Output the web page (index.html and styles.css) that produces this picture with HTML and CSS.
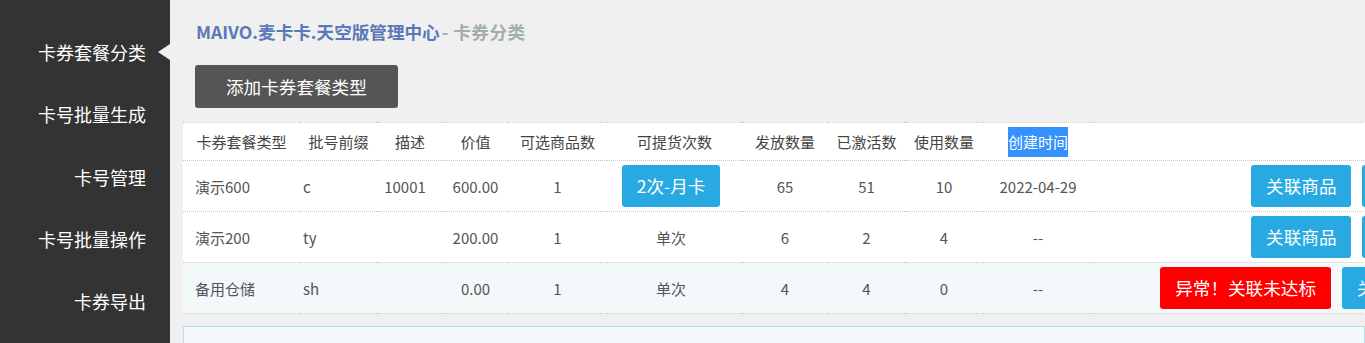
FILE: index.html
```html
<!DOCTYPE html>
<html lang="zh-CN">
<head>
    <meta charset="UTF-8">
    <title>卡券分类</title>

    <link rel="stylesheet" href="styles.css">

</head>
<body>

<aside id="side">
    <ul class="side_nav">
        <li class="side_nav-active"><a href="#">卡券套餐分类</a></li>
        <li><a href="#">卡号批量生成</a></li>
        <li><a href="#">卡号管理</a></li>
        <li><a href="#">卡号批量操作</a></li>
        <li><a href="#">卡券导出</a></li>
    </ul>
</aside>

<section id="main">
    <h1 class="main_title">MAIVO.麦卡卡.天空版管理中心<span class="main_sub">- 卡券分类</span></h1>

    <a href="#" class="btn btn_dark main_add">添加卡券套餐类型</a>

    <table class="card_table">
        <colgroup>
            <col style="width:117px">
            <col style="width:77px">
            <col style="width:66px">
            <col style="width:65px">
            <col style="width:99px">
            <col style="width:135px">
            <col style="width:86px">
            <col style="width:77px">
            <col style="width:78px">
            <col style="width:110px">
            <col style="width:581px">
        </colgroup>
        <thead>
        <tr>
            <th>卡券套餐类型</th>
            <th>批号前缀</th>
            <th>描述</th>
            <th>价值</th>
            <th>可选商品数</th>
            <th>可提货次数</th>
            <th>发放数量</th>
            <th>已激活数</th>
            <th>使用数量</th>
            <th><span class="th_mark">创建时间</span></th>
            <th></th>
        </tr>
        </thead>
        <tbody>
        <tr>
            <td class="td_name">演示600</td>
            <td class="td_prefix">c</td>
            <td class="td_desc">10001</td>
            <td>600.00</td>
            <td>1</td>
            <td class="td_times"><a href="#" class="btn btn_blue">2次-月卡</a></td>
            <td>65</td>
            <td>51</td>
            <td>10</td>
            <td>2022-04-29</td>
            <td>
                <div class="td_ops">
                    <a href="#" class="btn btn_blue">关联商品</a>
                    <a href="#" class="btn btn_blue btn_small">修改</a>
                    <a href="#" class="btn btn_blue btn_small">删除</a>
                </div>
            </td>
        </tr>
        <tr>
            <td class="td_name">演示200</td>
            <td class="td_prefix">ty</td>
            <td class="td_desc"></td>
            <td>200.00</td>
            <td>1</td>
            <td class="td_times">单次</td>
            <td>6</td>
            <td>2</td>
            <td>4</td>
            <td>--</td>
            <td>
                <div class="td_ops">
                    <a href="#" class="btn btn_blue">关联商品</a>
                    <a href="#" class="btn btn_blue btn_small">修改</a>
                    <a href="#" class="btn btn_blue btn_small">删除</a>
                </div>
            </td>
        </tr>
        <tr class="tr_warn">
            <td class="td_name">备用仓储</td>
            <td class="td_prefix">sh</td>
            <td class="td_desc"></td>
            <td>0.00</td>
            <td>1</td>
            <td class="td_times">单次</td>
            <td>4</td>
            <td>4</td>
            <td>0</td>
            <td>--</td>
            <td>
                <div class="td_ops">
                    <a href="#" class="btn btn_red">异常！关联未达标</a>
                    <a href="#" class="btn btn_blue">关联商品</a>
                    <a href="#" class="btn btn_blue btn_small">修改</a>
                    <a href="#" class="btn btn_blue btn_small">删除</a>
                </div>
            </td>
        </tr>
        </tbody>
    </table>

    <div class="main_box"></div>
</section>

</body>
</html>
```

FILE: styles.css
```css
html, body {
    height: 100%;
}

body {
    margin: 0;
    display: flex;
    overflow: hidden;
    background-color: #f0f0f0;
    font-family: "Noto Sans CJK SC", "Liberation Sans", sans-serif;
    color: #555;
}

a {
    text-decoration: none;
}

/* 侧边栏 */
#side {
    flex: 0 0 170px;
    background-color: #333;
}

#side .side_nav {
    margin: 0;
    padding: 21px 0 0;
    list-style: none;
}

#side .side_nav li {
    position: relative;
    height: 62.3px;
    line-height: 62px;
    text-align: right;
    padding-right: 24px;
}

#side .side_nav li a {
    color: #fff;
    font-size: 18px;
}

#side .side_nav .side_nav-active::after {
    content: '';
    position: absolute;
    right: 0;
    top: 23px;
    border-top: 8px solid transparent;
    border-bottom: 8px solid transparent;
    border-right: 12px solid #f0f0f0;
}

/* 主区域 */
#main {
    flex: 1;
    min-width: 0;
    padding-left: 13px;
    overflow: hidden;
}

#main .main_title {
    margin: 20px 0 0 13px;
    height: 24px;
    font-size: 17.6px;
    line-height: 24px;
    font-weight: bold;
    color: #5b79b8;
}

#main .main_sub {
    color: #a3aeae;
    margin-left: 2px;
    letter-spacing: .5px;
}

.btn {
    display: inline-block;
    height: 42px;
    line-height: 42px;
    padding: 0 15px;
    border-radius: 3px;
    color: #fff;
    font-size: 17.6px;
    white-space: nowrap;
}

.btn_dark {
    background-color: #555;
}

.btn_blue {
    background-color: #29a9e1;
}

.btn_red {
    background-color: #ff0000;
}

.btn_small {
    padding: 0 18px;
}

#main .main_add {
    margin: 21px 0 0 12px;
    height: 43px;
    line-height: 43px;
    padding: 0 31px;
}

/* 表格 */
.card_table {
    margin-top: 14px;
    width: 1491px;
    table-layout: fixed;
    border-collapse: collapse;
    background-color: #fff;
    border-top: 1px dotted #c8c8c8;
    font-size: 15px;
}

.card_table th,
.card_table td {
    padding: 0;
    text-align: center;
    border-bottom: 1px dotted #c8c8c8;
    white-space: nowrap;
}

.card_table th {
    height: 37px;
    font-weight: normal;
    color: #444;
}

.card_table td {
    height: 50px;
}

.card_table .th_mark {
    display: inline-block;
    line-height: 30px;
    background-color: #3592fd;
    color: #fff;
}

.card_table .td_name {
    text-align: left;
    padding-left: 12px;
}

.card_table .td_prefix {
    text-align: left;
    padding-left: 3px;
}

.card_table .td_desc {
    padding-right: 10px;
}

.card_table .td_times {
    padding-right: 7px;
}

.card_table .td_ops {
    display: flex;
    justify-content: center;
    gap: 11px;
}

.card_table .tr_warn {
    background-color: #f3f8fa;
}

.main_box {
    margin-top: 12px;
    height: 200px;
    border: 1px solid #b7dfe8;
    background-color: #f3f8fa;
}
```
